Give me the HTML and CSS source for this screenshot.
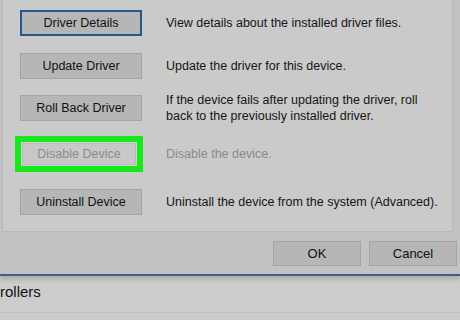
FILE: index.html
```html
<!DOCTYPE html>
<html lang="en">
<head>
  <meta charset="UTF-8">
  <title>Driver</title>
  <link rel="stylesheet" href="styles.css">
</head>
<body>
  <div class="dialog">
    <div class="panel">
      <div class="row">
        <button class="btn focused">Driver Details</button>
        <span class="desc">View details about the installed driver files.</span>
      </div>
      <div class="row">
        <button class="btn">Update Driver</button>
        <span class="desc">Update the driver for this device.</span>
      </div>
      <div class="row">
        <button class="btn">Roll Back Driver</button>
        <span class="desc">If the device fails after updating the driver, roll<br>back to the previously installed driver.</span>
      </div>
      <div class="row row-mark">
        <span class="mark"><button class="btn disabled">Disable Device</button></span>
        <span class="desc muted">Disable the device.</span>
      </div>
      <div class="row">
        <button class="btn">Uninstall Device</button>
        <span class="desc">Uninstall the device from the system (Advanced).</span>
      </div>
    </div>
    <div class="footer">
      <button class="btn small">OK</button>
      <button class="btn small">Cancel</button>
    </div>
  </div>
  <div class="list">
    <div class="list-item">rollers</div>
  </div>
</body>
</html>
```

FILE: styles.css
```css
* {
  margin: 0;
  padding: 0;
  box-sizing: border-box;
}

body {
  font-family: "Liberation Sans", Arial, sans-serif;
  background: #cdcdcd;
  color: #111;
  width: 460px;
  height: 320px;
  overflow: hidden;
}

.dialog {
  background: #c2c2c2;
  border-bottom: 2px solid #3d5f86;
  box-shadow: 0 3px 5px rgba(0, 0, 0, 0.18);
  position: relative;
}

.panel {
  margin-left: 2px;
  width: 451px;
  height: 232px;
  background: #cacaca;
  border: 1px solid #b9b9b9;
  border-top: none;
  padding: 10px 0 0 17px;
  display: flex;
  flex-direction: column;
}

.row {
  display: flex;
  align-items: center;
  height: 26px;
  margin-bottom: 17px;
  flex-shrink: 0;
}

.row:nth-child(2) {
  margin-bottom: 16px;
}

.row:nth-child(3) {
  margin-bottom: 15px;
}

.row:last-child {
  margin-bottom: 0;
}

.row-mark {
  height: 36px;
  margin-bottom: 17px;
}

.btn {
  font-family: "Liberation Sans", Arial, sans-serif;
  font-size: 12.5px;
  color: #111;
  width: 122px;
  height: 26px;
  background: #b6b6b6;
  border: 1px solid #a4a4a4;
  flex-shrink: 0;
}

.btn.focused {
  border: 2px solid #27558f;
}

.mark {
  display: block;
  width: 128px;
  height: 36px;
  margin-left: -5px;
  margin-right: -1px;
  border: 6px solid #17e81b;
  background: #d2d2d2;
  padding: 1px;
  flex-shrink: 0;
}

.btn.disabled {
  width: 114px;
  height: 22px;
  background: #c8c8c8;
  border-color: #bababa;
  color: #8c8c8c;
}

.desc {
  font-size: 12.5px;
  line-height: 16px;
  margin-left: 24px;
  color: #151515;
}

.desc.muted {
  color: #8a8a8a;
}

.footer {
  display: flex;
  justify-content: flex-end;
  gap: 8px;
  padding: 9px 3px 8px 0;
}

.btn.small {
  width: 88px;
  height: 25px;
  font-size: 13px;
}

.list-item {
  font-size: 15px;
  line-height: 32px;
  height: 37px;
  border-bottom: 1px solid #c0c0c0;
}
```
